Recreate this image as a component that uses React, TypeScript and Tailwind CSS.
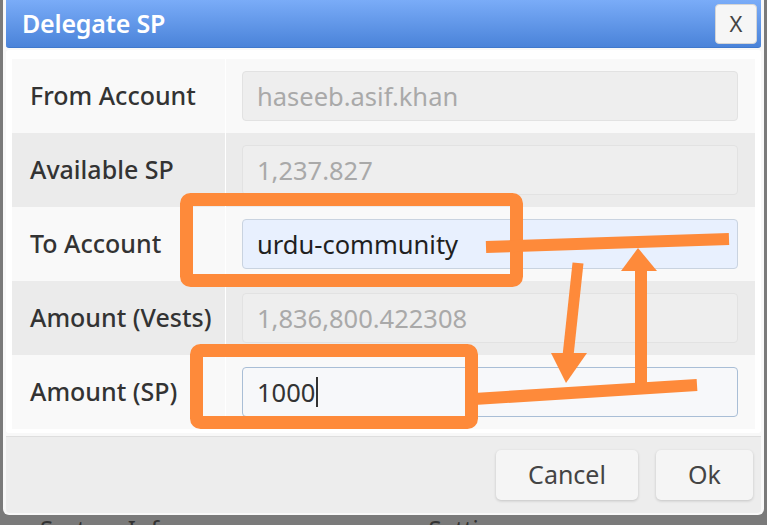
const rows = [
  { label: "From Account", value: "haseeb.asif.khan", kind: "disabled" },
  { label: "Available SP", value: "1,237.827", kind: "disabled" },
  { label: "To Account", value: "urdu-community", kind: "autofill" },
  { label: "Amount (Vests)", value: "1,836,800.422308", kind: "disabled" },
  { label: "Amount (SP)", value: "1000", kind: "focused" },
];

const inputClass = (kind: string) => {
  if (kind === "autofill") return "border-[#c9d3e0] bg-[#e8f0fe] text-[#1f1f1f]";
  if (kind === "focused") return "border-[#a9bed6] bg-[#f7f8fa] text-[#333]";
  return "border-[#e2e2e2] bg-[#eeeeee] text-[#a9a9a9]";
};

const Annotations = () => (
  <svg className="pointer-events-none absolute left-0 top-0" width="767" height="525" viewBox="0 0 767 525">
    <g fill="none" stroke="#fe8a3a" strokeWidth="13">
      <rect x="186.5" y="199.5" width="330" height="81" rx="4" />
      <rect x="196.5" y="350.5" width="275" height="72" rx="4" />
    </g>
    <g stroke="#fe8a3a" strokeWidth="12">
      <line x1="486" y1="247" x2="729" y2="239" />
      <line x1="474" y1="399" x2="697" y2="385" />
      <line x1="578" y1="263" x2="568" y2="356" strokeWidth="11" />
      <line x1="641" y1="384" x2="641" y2="268" />
    </g>
    <g fill="#fe8a3a">
      <polygon points="551,353 587,353 566,383" />
      <polygon points="621,271 657,271 638,248" />
    </g>
  </svg>
);

export default function App() {
  return (
    <div
      className="relative h-[525px] w-[767px] overflow-hidden bg-[#7a7a7a]"
      style={{ fontFamily: "'Noto Sans', 'Open Sans', sans-serif" }}
    >
      <div className="mx-[3px] h-[515px] rounded-b-md bg-[#f8f8f8] px-[3px] pb-[3px]">
        <div className="flex h-[48px] items-center justify-between rounded-b-[3px] border-b border-[#3f78cc] bg-gradient-to-b from-[#7aacf8] to-[#4a83d9] pl-[16px] pr-[4px]">
          <h1 className="text-[25px] font-semibold tracking-[-0.2px] text-white">Delegate SP</h1>
          <div className="flex h-[40px] w-[42px] items-center justify-center rounded-[4px] border border-[#d5d5d5] bg-[#f6f6f6] text-[22px] text-[#444]">
            X
          </div>
        </div>

        <div className="mt-[2px] rounded-[3px] bg-white px-[6px] pb-[4px] pt-[9px]">
          {rows.map((row, i) => (
            <div
              key={row.label}
              className={`flex h-[74px] ${i % 2 === 1 ? "bg-[#ebebeb]" : "bg-[#f9f9f9]"}`}
            >
              <div className="flex w-[214px] items-center border-r border-white pl-[18px] text-[25px] font-medium text-[#333]">
                {row.label}
              </div>
              <div className="flex flex-1 items-center pl-[16px] pr-[17px]">
                <div
                  className={`flex h-[50px] w-full items-center rounded-[4px] border px-[14px] text-[25.5px] ${inputClass(row.kind)}`}
                >
                  <span>{row.value}</span>
                  {row.kind === "focused" ? <span className="ml-[1px] h-[30px] w-[2px] bg-[#333]" /> : null}
                </div>
              </div>
            </div>
          ))}
        </div>

        <div className="mt-[3px] flex h-[77px] items-center justify-end gap-[18px] rounded-b-[4px] border-t border-[#dedede] bg-[#ededed] pr-[8px]">
          <div className="flex h-[50px] w-[142px] items-center justify-center rounded-[5px] bg-[#f5f5f5] text-[25px] text-[#444] shadow-[0_1px_3px_rgba(0,0,0,0.18)]">
            Cancel
          </div>
          <div className="flex h-[50px] w-[97px] items-center justify-center rounded-[5px] bg-[#f5f5f5] text-[25px] text-[#444] shadow-[0_1px_3px_rgba(0,0,0,0.18)]">
            Ok
          </div>
        </div>
      </div>

      <div className="flex h-[10px] items-start overflow-hidden text-[24px] leading-none text-[#333]">
        <span className="ml-[40px] mt-[2px]">System Info</span>
        <span className="ml-[255px] mt-[2px]">Settings</span>
      </div>

      <Annotations />
    </div>
  );
}
